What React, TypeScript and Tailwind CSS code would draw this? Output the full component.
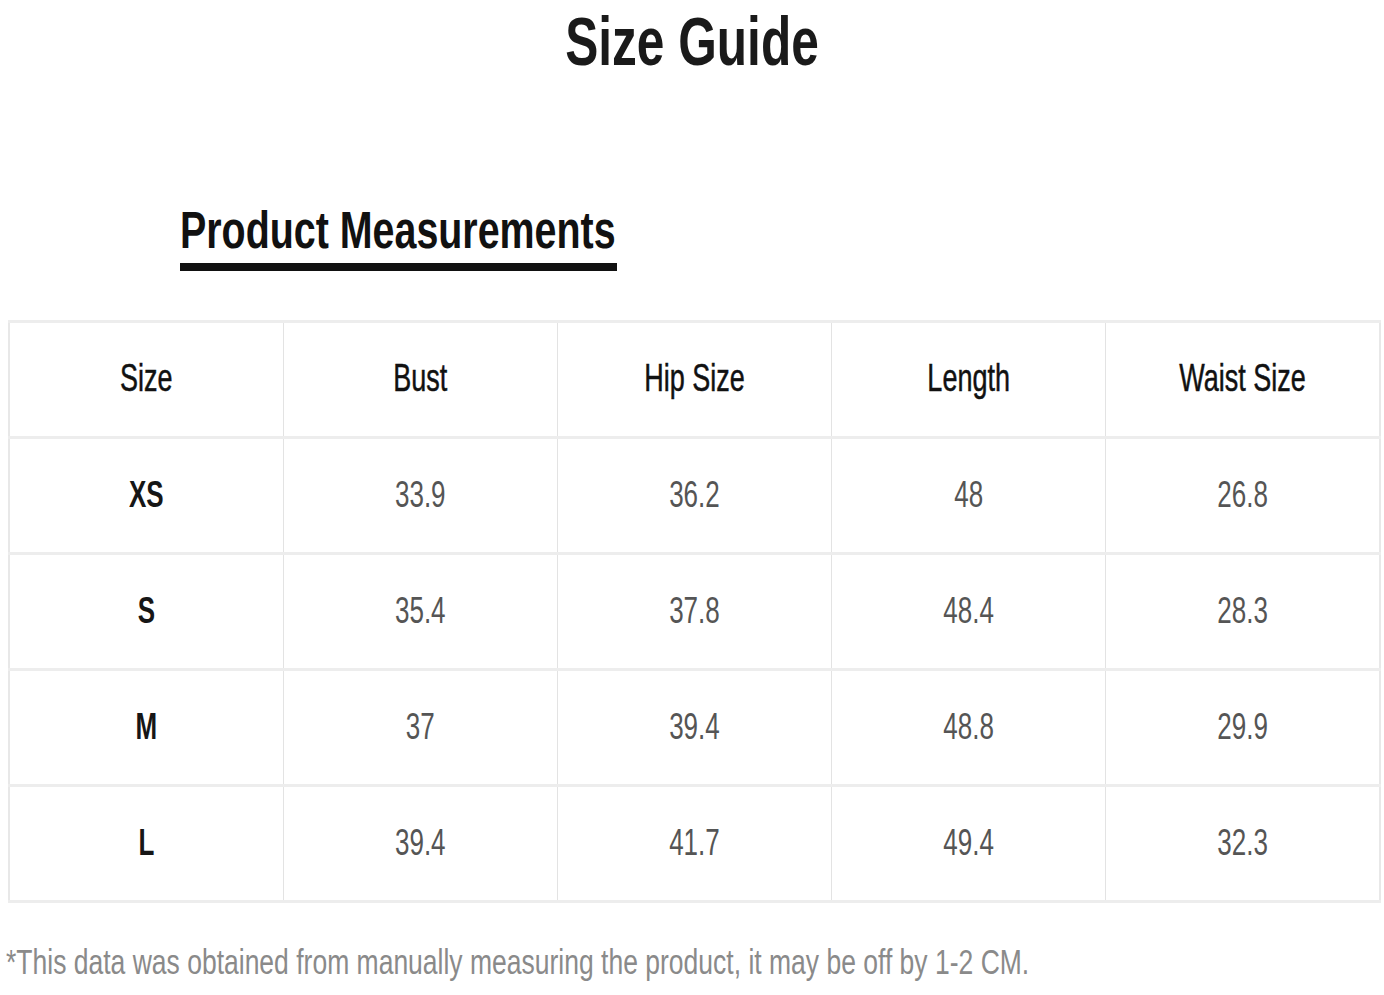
import React from 'react';

const headers = ['Size', 'Bust', 'Hip Size', 'Length', 'Waist Size'];

const rows: string[][] = [
    ['XS', '33.9', '36.2', '48', '26.8'],
    ['S', '35.4', '37.8', '48.4', '28.3'],
    ['M', '37', '39.4', '48.8', '29.9'],
    ['L', '39.4', '41.7', '49.4', '32.3'],
];

const cellCls = 'h-[116.1px] p-0 text-center align-middle border-x border-x-[#e3e3e3] border-y-[3px] border-y-[#ededed]';

const App: React.FC = () => {
    return (
        <div className="min-h-[995px] w-[1384px] bg-white font-['Liberation_Sans',Arial,sans-serif]">
            <div className="flex justify-center pt-[18px]">
                <h1 className="inline-block scale-y-[1.37] text-[49.6px] leading-none font-bold text-[#1a1a1a]">Size Guide</h1>
            </div>

            <div className="pl-[180px] pt-[143px]">
                <div className="inline-flex flex-col">
                    <h2 className="inline-block scale-y-[1.32] text-[39.4px] leading-none font-bold text-[#111]">Product Measurements</h2>
                    <div className="mt-[13px] h-[8px] w-[437px] bg-[#111]" />
                </div>
            </div>

            <div className="pl-[8px] pt-[49px]">
                <table className="w-[1373px] table-fixed border-collapse border-2 border-[#e8e8e8]">
                    <thead>
                        <tr>
                            {headers.map(h => (
                                <th key={h} className={cellCls}>
                                    <span className="inline-block scale-y-[1.42] text-[27px] leading-none font-normal text-[#111] [-webkit-text-stroke:0.35px_#111]">{h}</span>
                                </th>
                            ))}
                        </tr>
                    </thead>
                    <tbody>
                        {rows.map(r => (
                            <tr key={r[0]}>
                                {r.map((v, i) => (
                                    <td key={i} className={cellCls}>
                                        {i === 0 ? (
                                            <span className="inline-block scale-y-[1.42] text-[26px] leading-none font-bold text-[#161616]">{v}</span>
                                        ) : (
                                            <span className="inline-block scale-y-[1.45] text-[26px] leading-none text-[#555]">{v}</span>
                                        )}
                                    </td>
                                ))}
                            </tr>
                        ))}
                    </tbody>
                </table>
            </div>

            <div className="pl-[6px] pt-[46px]">
                <p className="inline-block scale-y-[1.33] text-[26.5px] leading-none text-[#8a8a8a]">
                    *This data was obtained from manually measuring the product, it may be off by 1-2 CM.
                </p>
            </div>
        </div>
    );
};

export default App;
